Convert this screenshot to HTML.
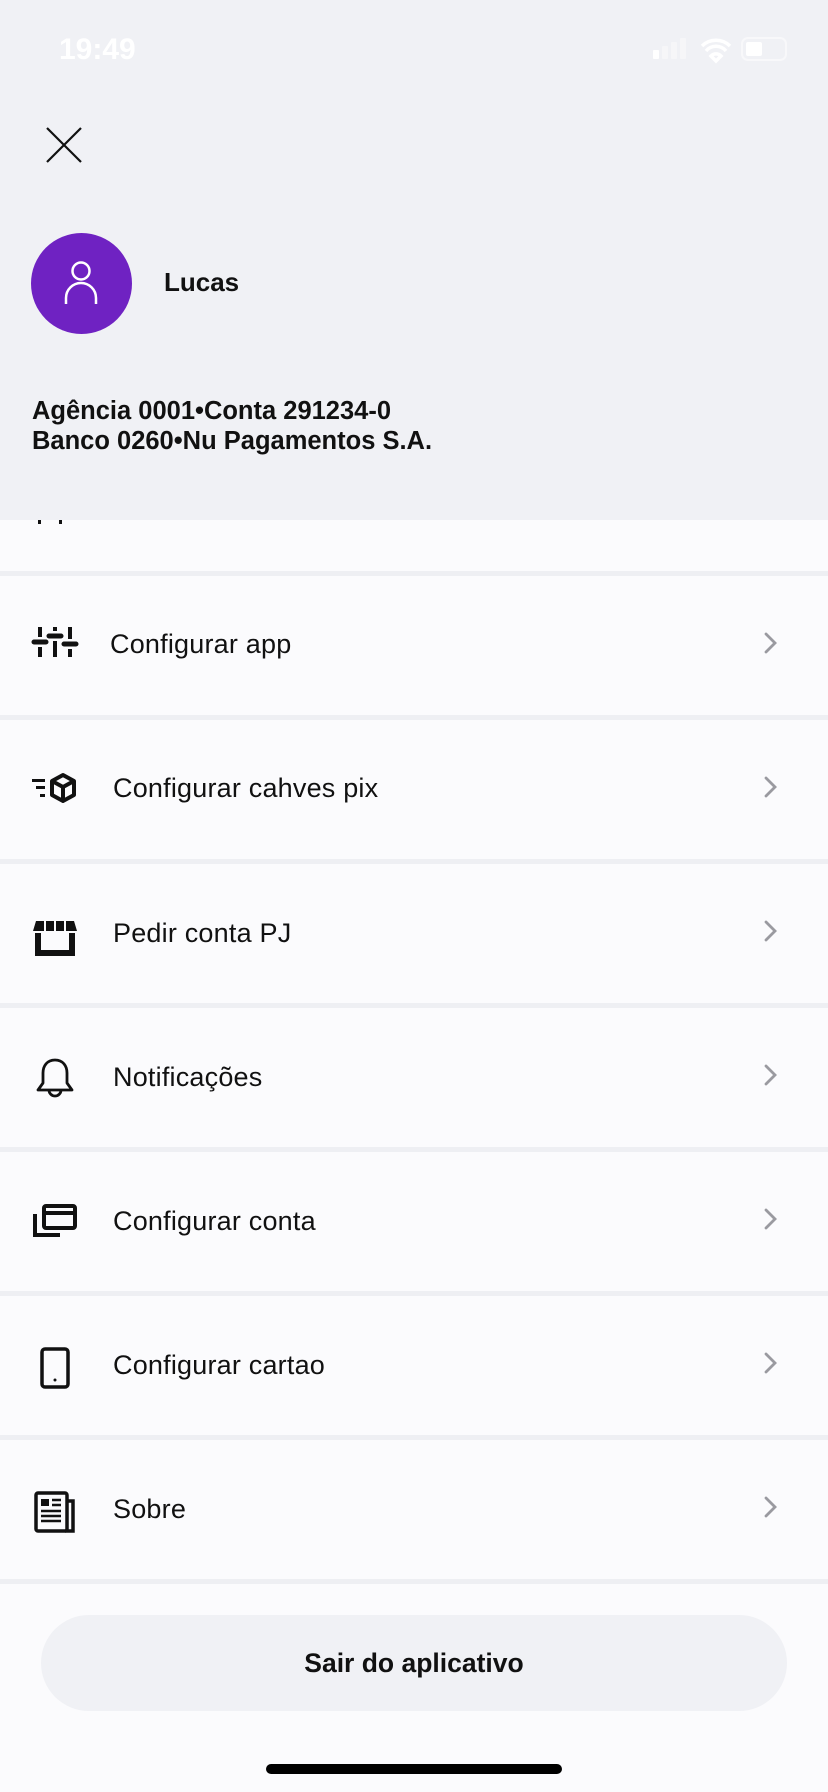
<!DOCTYPE html>
<html><head><meta charset="utf-8"><style>
*{margin:0;padding:0;box-sizing:border-box}
body{width:828px;height:1792px;background:#fbfbfd;font-family:"Liberation Sans",sans-serif;color:#111;position:relative;overflow:hidden}
.hdr{position:absolute;left:0;top:0;width:828px;height:520px;background:#f0f1f5}
.abs{position:absolute}
.sep{position:absolute;left:0;width:828px;height:5px;background:#eeeff3}
.row{position:absolute;left:0;width:828px;height:60px}
.row .t{position:absolute;left:113px;top:0;line-height:60px;font-size:27px;letter-spacing:0.2px}
.row svg.ic{position:absolute;left:31px;top:10px}
</style></head><body>
<div class="hdr"></div>
<div class="abs" style="left:59px;top:33px;font-size:30px;color:#fff;font-weight:bold">19:49</div>
<svg class="abs" style="left:650px;top:36px" width="145" height="28">
<rect x="3" y="14" width="6" height="9" rx="1" fill="#fff"/><rect x="12" y="10" width="6" height="13" rx="1" fill="#f6f6f8"/><rect x="21" y="6" width="6" height="17" rx="1" fill="#f6f6f8"/><rect x="30" y="2" width="6" height="21" rx="1" fill="#f6f6f8"/>
<path d="M52 10a20 20 0 0 1 28 0M56 15a13 13 0 0 1 20 0M61 20l5 5 5-5a7 7 0 0 0-10 0z" stroke="#fff" stroke-width="3.5" fill="none"/>
<rect x="92" y="2" width="44" height="22" rx="6" fill="none" stroke="#f8f8fa" stroke-width="2"/><rect x="96" y="6" width="16" height="14" rx="2" fill="#fff"/>
</svg>
<svg class="abs" style="left:46px;top:127px" width="36" height="36"><path d="M1 1L35 35M35 1L1 35" stroke="#111" stroke-width="2.2"/></svg>
<div class="abs" style="left:31px;top:233px;width:101px;height:101px;border-radius:50%;background:#6f22c2"></div>
<svg class="abs" style="left:62px;top:258px" width="38" height="50"><circle cx="19" cy="13" r="8.5" stroke="#fff" stroke-width="2.5" fill="none"/><path d="M4 46V40a15 15 0 0 1 30 0v6" stroke="#fff" stroke-width="2.5" fill="none"/></svg>
<div class="abs" style="left:164px;top:267px;font-size:26px;font-weight:bold">Lucas</div>
<div class="abs" style="left:32px;top:396px;font-size:25.5px;line-height:30px;font-weight:bold;color:#111;white-space:nowrap">Agência 0001•Conta 291234-0<br>Banco 0260•Nu Pagamentos S.A.</div>
<svg class="abs" style="left:36px;top:520px" width="40" height="6"><rect x="2" y="0" width="3" height="4" fill="#111"/><rect x="23" y="0" width="3" height="4" fill="#111"/></svg>

<div class="sep" style="top:571px"></div>
<div class="sep" style="top:715px"></div>
<div class="sep" style="top:859px"></div>
<div class="sep" style="top:1003px"></div>
<div class="sep" style="top:1147px"></div>
<div class="sep" style="top:1291px"></div>
<div class="sep" style="top:1435px"></div>
<div class="sep" style="top:1579px"></div>

<div class="row" style="top:614px"><svg class="ic" width="48" height="40"><g stroke="#111" stroke-width="4" fill="none"><path d="M9 3v10M9 23v10M24 3v4M24 17v16M39 3v12M39 25v8"/><path d="M3 18h12M18 12h12M33 20h12" stroke-linecap="round" stroke-width="5"/></g></svg><div class="t" style="left:110px">Configurar app</div></div>
<div class="row" style="top:758px"><svg class="ic" width="48" height="40"><g fill="#111"><rect x="1" y="11" width="13" height="3"/><rect x="5" y="18" width="9" height="3"/><rect x="9" y="26" width="5" height="3"/></g><path d="M32 7l11 6v14l-11 6-11-6V13zM21 13l11 6 11-6M32 19v14" stroke="#111" stroke-width="4" fill="none" stroke-linejoin="round"/></svg><div class="t">Configurar cahves pix</div></div>
<div class="row" style="top:903px"><svg class="ic" width="48" height="44"><path d="M5 8h38l3 10H2z" fill="#111"/><path d="M7 20v20h34V20" stroke="#111" stroke-width="6" fill="none"/><path d="M14 8v10M24 8v10M34 8v10" stroke="#fbfbfd" stroke-width="2"/></svg><div class="t">Pedir conta PJ</div></div>
<div class="row" style="top:1047px"><svg class="ic" width="48" height="46"><path d="M24 3c-8 0-12 6-12 13v10l-5 7h34l-5-7V16c0-7-4-13-12-13zM18 33a6 6 0 0 0 12 0" stroke="#111" stroke-width="2.8" fill="none" stroke-linejoin="round"/></svg><div class="t">Notificações</div></div>
<div class="row" style="top:1191px"><svg class="ic" width="48" height="44"><rect x="13" y="5" width="31" height="22" rx="2" stroke="#111" stroke-width="4" fill="none"/><rect x="13" y="10" width="31" height="4" fill="#111"/><path d="M4 13v21h25" stroke="#111" stroke-width="4" fill="none"/></svg><div class="t">Configurar conta</div></div>
<div class="row" style="top:1335px"><svg class="ic" width="48" height="46"><rect x="11" y="4" width="26" height="38" rx="3" stroke="#111" stroke-width="3.5" fill="none"/><circle cx="24" cy="35" r="1.5" fill="#111"/></svg><div class="t">Configurar cartao</div></div>
<div class="row" style="top:1479px"><svg class="ic" width="48" height="46"><rect x="5" y="4" width="31" height="38" rx="2" stroke="#111" stroke-width="3.5" fill="none"/><path d="M36 12h6v30H34" stroke="#111" stroke-width="3.5" fill="none"/><rect x="10" y="10" width="8" height="7" fill="#111"/><path d="M21 11h9M21 16h9M10 22h20M10 27h20M10 32h20" stroke="#111" stroke-width="2.5"/></svg><div class="t">Sobre</div></div>

<svg class="abs" style="left:763px;top:632px" width="16" height="900">
<g stroke="#9a9aa0" stroke-width="2.8" fill="none" stroke-linecap="round"><path d="M3 2l9 9-9 9"/><path d="M3 146l9 9-9 9"/><path d="M3 290l9 9-9 9"/><path d="M3 434l9 9-9 9"/><path d="M3 578l9 9-9 9"/><path d="M3 722l9 9-9 9"/><path d="M3 866l9 9-9 9"/></g></svg>

<div class="abs" style="left:41px;top:1615px;width:746px;height:96px;border-radius:48px;background:#f0f1f5;text-align:center;line-height:96px;font-size:26.5px;font-weight:bold">Sair do aplicativo</div>
<div class="abs" style="left:266px;top:1764px;width:296px;height:10px;border-radius:5px;background:#000"></div>
</body></html>
